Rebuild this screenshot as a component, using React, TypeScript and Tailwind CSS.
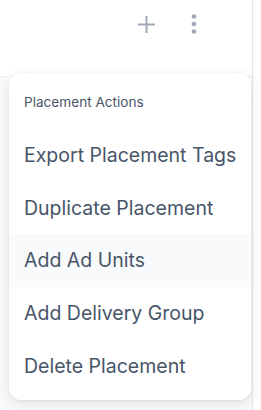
import React from "react";

export default function App() {
  const items = [
    "Export Placement Tags",
    "Duplicate Placement",
    "Add Ad Units",
    "Add Delivery Group",
    "Delete Placement",
  ];
  return (
    <div
      className="relative w-[261px] h-[410px] overflow-hidden bg-white flex"
      style={{ fontFamily: "Inter, 'Noto Sans', sans-serif" }}
    >
      <div className="w-[253px] h-full flex flex-col border-r border-[#e5e7eb]">
        <div className="h-[77px] bg-white border-b border-[#eef0f4] flex justify-end items-start pt-3 pr-[46px] gap-6">
          <div className="w-6 h-6 flex items-center justify-center">
            <svg width="19" height="19" viewBox="0 0 19 19" fill="none">
              <path d="M9.5 1v17M1 9.5h17" stroke="#a0a8b8" strokeWidth="2" strokeLinecap="butt" />
            </svg>
          </div>
          <div className="w-6 h-6 flex items-center justify-center">
            <svg width="6" height="20" viewBox="0 0 6 20" fill="#a0a8b8">
              <circle cx="3" cy="2.5" r="2.3" />
              <circle cx="3" cy="10" r="2.3" />
              <circle cx="3" cy="17.5" r="2.3" />
            </svg>
          </div>
        </div>
        <div className="flex-1 bg-[#f9fafb]" />
      </div>
      <div className="flex-1 bg-white" />

      <div className="absolute left-[9px] top-[73px] w-[242px] h-[327px] bg-white rounded-xl shadow-[0_4px_14px_rgba(30,41,59,0.10),0_1px_3px_rgba(30,41,59,0.06)] overflow-hidden">
        <div className="pt-[19px] pb-[16.6px] px-[15px] text-[13.6px] leading-[20px] text-[#4a5568] whitespace-nowrap">
          Placement Actions
        </div>
        {items.map((t, i) => (
          <div
            key={t}
            className={
              "h-[52.75px] flex items-center px-[15px] text-[19.5px] leading-[28px] text-[#475569] whitespace-nowrap " +
              (i === 2 ? "bg-[#f8fafc]" : "")
            }
          >
            {t}
          </div>
        ))}
      </div>
    </div>
  );
}
